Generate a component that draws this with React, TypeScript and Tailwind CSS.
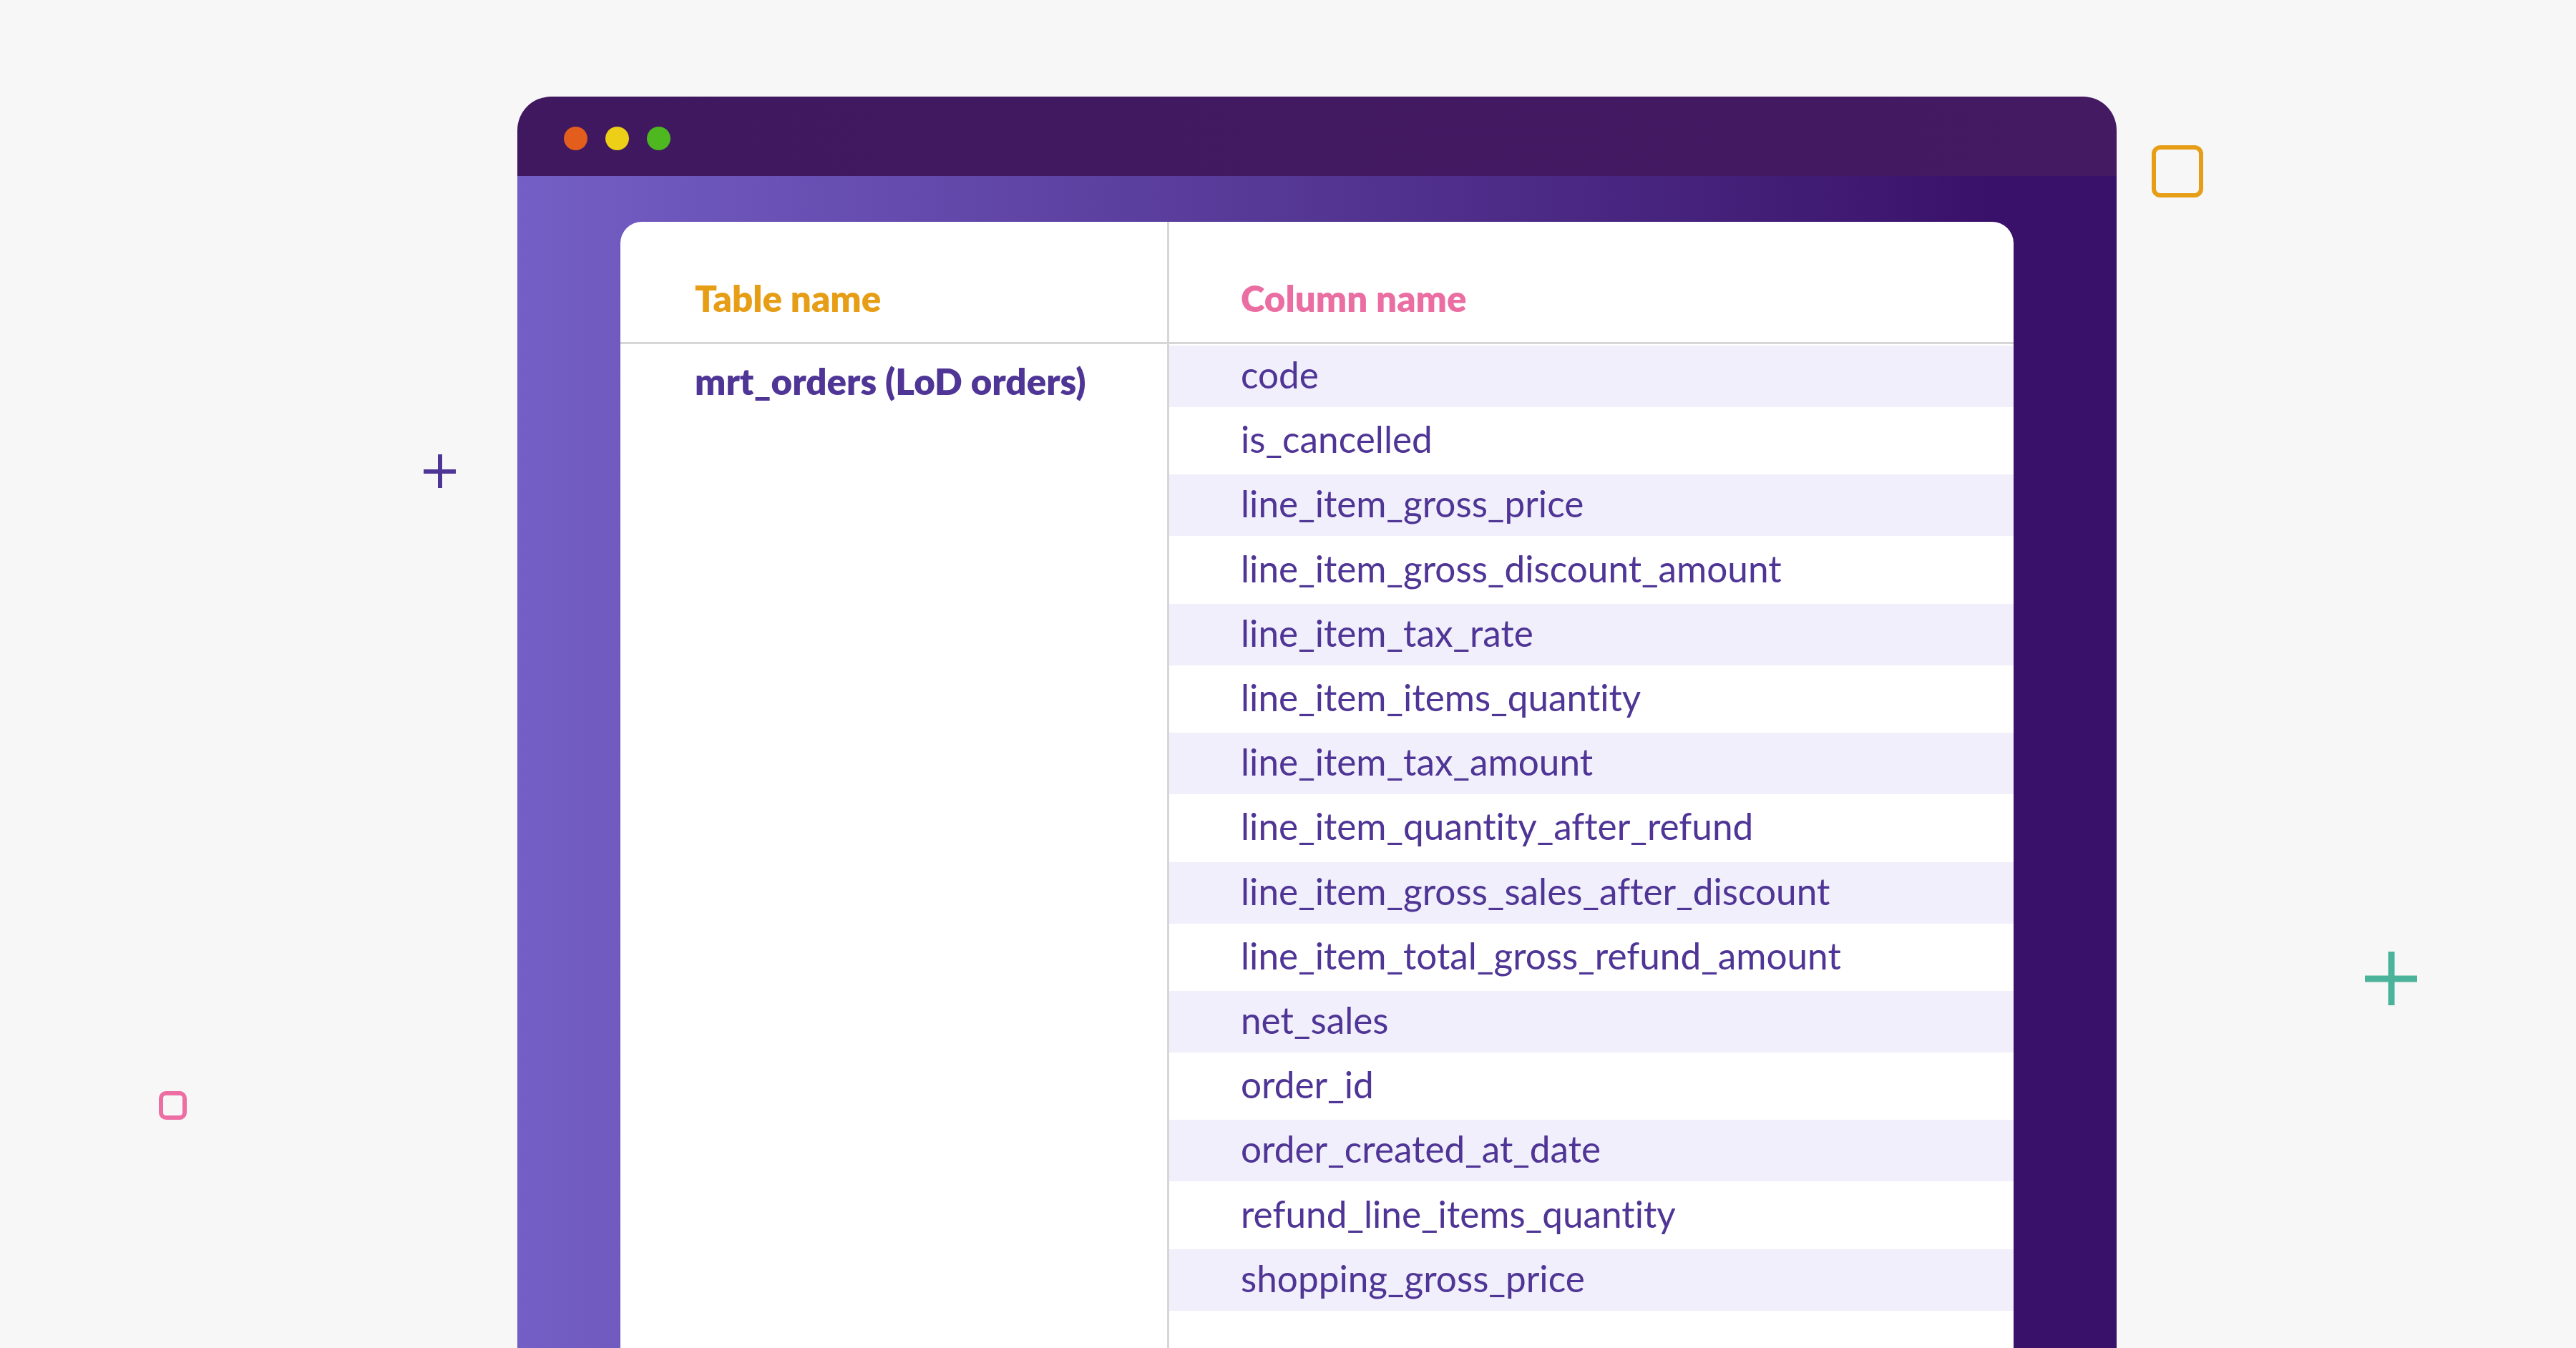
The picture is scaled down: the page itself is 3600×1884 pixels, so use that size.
const columns = [
  'code',
  'is_cancelled',
  'line_item_gross_price',
  'line_item_gross_discount_amount',
  'line_item_tax_rate',
  'line_item_items_quantity',
  'line_item_tax_amount',
  'line_item_quantity_after_refund',
  'line_item_gross_sales_after_discount',
  'line_item_total_gross_refund_amount',
  'net_sales',
  'order_id',
  'order_created_at_date',
  'refund_line_items_quantity',
  'shopping_gross_price',
];

function Plus({ className, bar, stem }: { className: string; bar: string; stem: string }) {
  return (
    <div className={`absolute ${className}`}>
      <div className={`absolute left-0 right-0 top-1/2 -translate-y-1/2 bg-current ${bar}`} />
      <div className={`absolute top-0 bottom-0 left-1/2 -translate-x-1/2 bg-current ${stem}`} />
    </div>
  );
}

export default function App() {
  return (
    <div className="relative w-[3600px] h-[1884px] overflow-hidden bg-[#f7f7f7] pt-[135px] pl-[723px] font-['Lato',sans-serif] [font-variant-ligatures:none]">
      <div className="absolute left-[3007px] top-[203px] w-[72px] h-[73px] rounded-[12px] border-[6px] border-[#e79e17]" />
      <div className="absolute left-[222px] top-[1525px] w-[39px] h-[40px] rounded-[10px] border-[6px] border-[#ec6ea3]" />
      <Plus className="left-[592px] top-[635px] w-[45px] h-[47px] text-[#4f3595]" bar="h-[6px]" stem="w-[6px]" />
      <Plus className="left-[3305px] top-[1330px] w-[73px] h-[75px] text-[#4bb39a]" bar="h-[9px]" stem="w-[9px]" />

      <div className="w-[2235px] h-[1749px] rounded-t-[47px] overflow-hidden flex flex-col">
        <div className="h-[111px] shrink-0 bg-gradient-to-r from-[#3f1860] to-[#441a63] flex items-center gap-[25px] pl-[65px] pt-[5px]">
          <div className="w-[33px] h-[33px] rounded-full bg-[#e35d1c]" />
          <div className="w-[33px] h-[33px] rounded-full bg-[#eccf16]" />
          <div className="w-[33px] h-[33px] rounded-full bg-[#4db81f]" />
        </div>
        <div className="flex-1 bg-gradient-to-r from-[#745fc6] to-[#3a116a] to-[92%] pt-[64px] pl-[144px] pr-[144px]">
          <div className="h-full bg-white rounded-t-[30px] grid grid-cols-[767px_1fr] grid-rows-[171px_1fr]">
            <div className="border-b-[3px] border-r-[3px] border-[#d6d6d6] pl-[104px] pt-[77px] text-[#e79e17] font-extrabold text-[51px] leading-[60px]">
              Table name
            </div>
            <div className="border-b-[3px] border-[#d6d6d6] pl-[100px] pt-[77px] text-[#ea6ea2] font-extrabold text-[51px] leading-[60px]">
              Column name
            </div>
            <div className="border-r-[3px] border-[#d6d6d6] pl-[104px] pt-[22px] text-[#4f3595] font-extrabold text-[51px] leading-[60px]">
              mrt_orders (LoD orders)
            </div>
            <div className="pt-[2px] text-[#4f3595] text-[51.3px] leading-[60px]">
              {columns.map((name, i) =>
                i % 2 === 0 ? (
                  <div key={name} className="h-[86px] flex items-center pl-[100px] pb-[6px] bg-[#f1effb]">{name}</div>
                ) : (
                  <div key={name} className="h-[94.4px] flex items-center pl-[100px] pb-[6px]">{name}</div>
                ),
              )}
            </div>
          </div>
        </div>
      </div>
    </div>
  );
}
